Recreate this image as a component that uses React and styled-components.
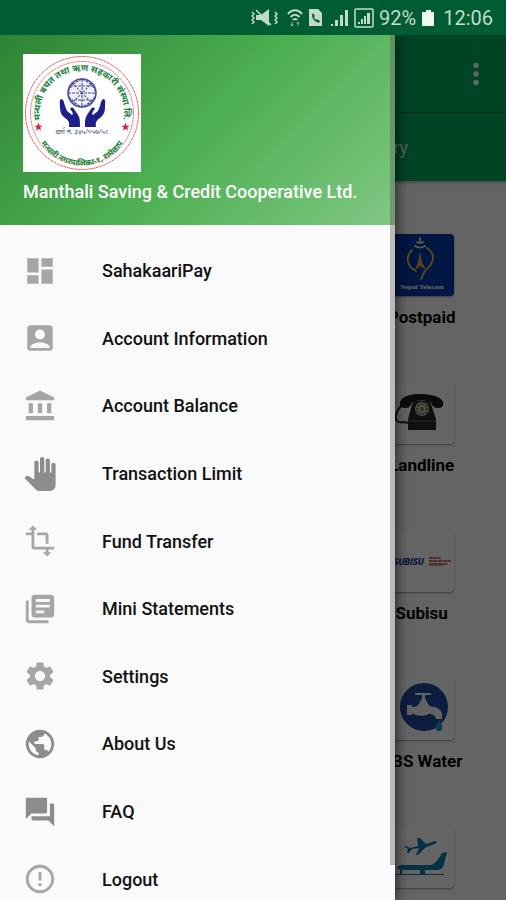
import React from "react";
import styled, { createGlobalStyle } from "styled-components";
import {
  MdDashboard,
  MdAccountBox,
  MdAccountBalance,
  MdPanTool,
  MdTransform,
  MdLibraryBooks,
  MdSettings,
  MdPublic,
  MdForum,
  MdErrorOutline,
  MdMoreVert,
} from "react-icons/md";

const GlobalStyle = createGlobalStyle`
  * { box-sizing: border-box; }
  body {
    margin: 0;
    font-family: Roboto, "Noto Sans", sans-serif;
    background: #fafafa;
  }
`;

const Screen = styled.div`
  display: flex;
  flex-direction: column;
  height: 100vh;
  overflow: hidden;
`;

const StatusBar = styled.header`
  display: flex;
  align-items: center;
  justify-content: flex-end;
  flex: none;
  gap: 5px;
  height: 35px;
  padding-right: 13px;
  background: #005c33;
  color: #c3dacb;
  font-size: 20px;
  line-height: 24px;

  svg { display: block; flex: none; }
`;

const Stage = styled.div`
  position: relative;
  flex: 1;
  min-height: 0;
  overflow: hidden;
`;

const AppBar = styled.div`
  display: flex;
  align-items: center;
  justify-content: flex-end;
  height: 78px;
  padding-right: 13px;
  background: #00aa60;
  border-bottom: 1px solid #008c4e;
`;

const IconButton = styled.button`
  display: flex;
  padding: 0;
  border: 0;
  background: none;
  color: #fff;
  font-size: 34px;
`;

const TabBar = styled.nav`
  display: grid;
  grid-template-columns: repeat(2, 1fr);
  height: 68px;
  background: #00aa60;
  box-shadow: 0 1px 4px rgba(0, 0, 0, 0.4);
`;

const Tab = styled.a`
  grid-column: 2;
  display: flex;
  align-items: center;
  justify-content: center;
  color: #e4f2ea;
  font-size: 18px;
  text-decoration: none;
`;

const ServiceGrid = styled.main`
  display: grid;
  grid-template-columns: repeat(3, 1fr);
  grid-auto-rows: 95px;
  row-gap: 53px;
  padding-top: 53px;
`;

const Service = styled.a`
  grid-column: 3;
  display: flex;
  flex-direction: column;
  align-items: center;
  gap: 9px;
  color: #000;
  text-decoration: none;
  font-weight: 700;
  font-size: 17px;
  line-height: 24px;
  white-space: nowrap;
`;

const Tile = styled.span`
  display: block;
  width: 62px;
  height: 62px;
  margin-left: 2px;
  overflow: hidden;
  flex: none;
  border-radius: 4px;
  background: ${(p) => p.$color || "#fdfdfd"};
  box-shadow: 0 1px 2px rgba(0, 0, 0, 0.4);

  svg { display: block; }
`;

const Scrim = styled.div`
  position: absolute;
  inset: 0;
  background: rgba(0, 0, 0, 0.6);
`;

const Drawer = styled.aside`
  position: absolute;
  inset: 0 auto 0 0;
  width: 78%;
  overflow: hidden;
  background: #fafafa;
  box-shadow: 2px 0 12px rgba(0, 0, 0, 0.6);
`;

const DrawerHeader = styled.div`
  display: flex;
  flex-direction: column;
  gap: 8px;
  height: 190px;
  padding: 19px 23px 0;
  background: linear-gradient(135deg, #2e8335, #4caf50 50%, #81c784);
`;

const Title = styled.h1`
  margin: 0;
  color: #fff;
  font-size: 18px;
  line-height: 24px;
  font-weight: 500;
  white-space: nowrap;
`;

const Menu = styled.nav`
  display: grid;
  grid-template-rows: repeat(10, 1fr);
  height: 676px;
  margin-top: 12px;
`;

const MenuLink = styled.a`
  display: flex;
  align-items: center;
  gap: 45px;
  padding: 0 23px;
  color: #111;
  font-size: 18px;
  font-weight: 500;
  text-decoration: none;

  svg {
    flex: none;
    font-size: 34px;
    color: ${(p) => p.$tone};
  }
`;

const ScrollThumb = styled.div`
  position: absolute;
  top: 0;
  right: 0;
  width: 5px;
  height: 96%;
  background: rgba(90, 90, 90, 0.4);
`;

const LIGHT = "#a6a6a6";
const DARK = "#8c8c8c";

const menu = [
  ["SahakaariPay", MdDashboard, LIGHT],
  ["Account Information", MdAccountBox, LIGHT],
  ["Account Balance", MdAccountBalance, LIGHT],
  ["Transaction Limit", MdPanTool, DARK],
  ["Fund Transfer", MdTransform, LIGHT],
  ["Mini Statements", MdLibraryBooks, LIGHT],
  ["Settings", MdSettings, LIGHT],
  ["About Us", MdPublic, DARK],
  ["FAQ", MdForum, DARK],
  ["Logout", MdErrorOutline, LIGHT],
];

function CoopLogo() {
  const star = "M0-4.4 1.1-1.3 4.2-1.3 1.7.6 2.6 3.7 0 1.8-2.6 3.7-1.7.6-4.2-1.3-1.1-1.3Z";
  return (
    <svg width="118" height="118" viewBox="0 0 118 118" role="img" aria-label="Cooperative emblem">
      <defs>
        <path id="arcTop" d="M18 68A42 42 0 1 1 100 68" />
        <path id="arcBottom" d="M14 82A49 49 0 0 0 104 82" />
      </defs>
      <rect width="118" height="118" fill="#fff" />
      <g fill="none" stroke="#e4575a">
        <circle cx="59" cy="59" r="56.500" strokeWidth="1" strokeDasharray="3 .6" />
        <circle cx="59" cy="59" r="51.500" strokeWidth=".8" strokeDasharray="3 .6" />
      </g>
      <g fill="#18803a" fontWeight="700" fontSize="9" fontFamily='"Noto Sans", sans-serif'>
        <text textAnchor="middle">
          <textPath href="#arcTop" startOffset="50%">मन्थली बचत तथा ऋण सहकारी संस्था लि.</textPath>
        </text>
        <text fontSize="8" textAnchor="middle">
          <textPath href="#arcBottom" startOffset="50%">मन्थली नगरपालिका-१, रामेछाप</textPath>
        </text>
      </g>
      <path d={star} fill="#d5203a" transform="translate(15.500 73)" />
      <path d={star} fill="#d5203a" transform="translate(102.500 73)" />
      <g stroke="#4a4a9c" fill="none" strokeWidth="1.100">
        <circle cx="59" cy="39" r="14" fill="#f0f0f8" strokeWidth="1.500" />
        <path d="M45 39h28M59 25v28M47 32h24M47 46h24M59 25c-18 8-18 20 0 28M59 25c18 8 18 20 0 28" strokeDasharray="3 1" />
        <path d="m49 29 20 20M69 29 49 49" strokeDasharray="2 1.500" />
      </g>
      <g fill="#1e1e8c">
        <path d="M57 73H46c1-5-1-7-4-9-4-3-5-7-5-11 0-3-1-6 1-8 3 0 3 4 4 7l2 5 5 4c2-1 0-4-2-6 1-2 3-2 4 0l4 6c2 3 2 6 2 12z" />
        <path d="M62 73h11c-1-5 1-7 4-9 4-3 5-7 5-11 0-3 1-6-1-8-3 0-3 4-4 7l-2 5-5 4c-2-1 0-4 2-6-1-2-3-2-4 0l-4 6c-2 3-2 6-2 12z" />
      </g>
      <text x="59" y="80" textAnchor="middle" fontSize="7" fill="#4a4a86" fontFamily='"Noto Sans", sans-serif'>
        दर्ता नं. ३४५/०५७/५८
      </text>
    </svg>
  );
}

function TelecomArt() {
  return (
    <svg width="62" height="62" viewBox="0 0 62 62" aria-hidden="true">
      <g fill="none" stroke="#e8b640" strokeWidth="1.800" strokeLinecap="round">
        <path d="M20 16c-7 7-5 17 4 21M35 14c9 6 7 15-1 22-3 3-4 6-5 9" />
        <path d="M23 12c3 2 7 2 10 0M25 8c2 1 5 1 6 0M28 4v3" stroke="#f4e6b0" />
      </g>
      <path d="m28 18 2 10 4 8-6-4-5 4 3-8z" fill="#e8a040" />
      <text x="30" y="55" textAnchor="middle" fill="#fff" fontSize="7" fontWeight="700" fontFamily='"Liberation Serif", serif'>
        Nepal Telecom
      </text>
    </svg>
  );
}

function PhoneArt() {
  return (
    <svg width="62" height="62" viewBox="0 0 62 62" aria-hidden="true">
      <path d="M13 22c-8 3-11 13-8 17 2 3 8 0 11 2" fill="none" stroke="#222" strokeWidth="2" />
      <path d="M8 20c2-7 13-8 21-8s20 2 22 8c1 4-1 6-5 6s-6-2-7-6c-7-2-13-2-19 0-1 4-3 6-6 6-4 0-7-2-6-6z" fill="#1d1d1d" />
      <path d="M21 19h17l6 18v11H16V37z" fill="#292929" />
      <path d="M16 39h28" stroke="#666" />
      <circle cx="30" cy="27" r="7" fill="#c6c6a8" />
      <circle cx="30" cy="27" r="5" fill="none" stroke="#555" strokeWidth="2" strokeDasharray="1.500 1.500" />
      <circle cx="30" cy="27" r="2" fill="#777" />
    </svg>
  );
}

function SubisuArt() {
  return (
    <svg width="62" height="62" viewBox="0 0 62 62" aria-hidden="true">
      <text x="1" y="35" fill="#26388f" fontSize="9" fontWeight="900" fontStyle="italic">
        SUBISU
      </text>
      <path d="M37 28h12M37 31h22M37 34h19" stroke="#c83a3a" strokeWidth="1.600" strokeDasharray="4 .6" />
      <path d="M37 35h14" stroke="#777" />
    </svg>
  );
}

function WaterArt() {
  return (
    <svg width="62" height="62" viewBox="0 0 62 62" aria-hidden="true">
      <circle cx="32" cy="29" r="24" fill="#224a9e" />
      <path
        fill="#f4f4f4"
        d="M23 15h16v2h-6v3l3 6c1 2 3 3 6 3 6 1 9 5 8 12h-6c0-3-3-5-7-5-6 3-13 2-17-1v2h-5V27h5v2c4 0 6-1 7-3l3-6v-3h-7z"
      />
      <path d="M47 42c5 7 4 11 0 11s-5-4 0-11z" fill="#1e8fc8" />
    </svg>
  );
}

function FlightArt() {
  return (
    <svg width="62" height="62" viewBox="0 0 62 62" aria-hidden="true" fill="#0e7aac">
      <path d="M9 44c-5-1-5-4 0-5h30c4-1 7-5 11-12l5-1-3 12c-1 4-3 6-8 6z" />
      <path d="M4 48h48v1H4zM8 44h2v4H8zM28 44h5v4h-5z" />
      <path d="m12 20 2 0 4 2 8-2-1-8 3 0 6 6 9-3c2 0 2 2 0 3l-9 3-8 8h-2l3-7-7 1-3 4-2 0 1-4z" />
    </svg>
  );
}

const services = [
  ["Postpaid", TelecomArt, "#0038a8"],
  ["Landline", PhoneArt],
  ["Subisu", SubisuArt],
  ["UBS Water", WaterArt],
  ["", FlightArt],
];

function StatusIcons() {
  return (
    <>
      <svg width="31" height="20" viewBox="0 0 31 20" fill="currentColor">
        <path d="M5 7h5l8-6v17l-8-6H5z" />
        <path d="m5 2 15 15M1 4l2 2-2 2 2 2-2 2 2 2-2 2M24 4l2 2-2 2 2 2-2 2 2 2-2 2" fill="none" stroke="currentColor" strokeWidth="1.500" />
      </svg>
      <svg width="16" height="20" viewBox="0 0 16 20" fill="none" stroke="currentColor" strokeWidth="2">
        <path d="M1 6c4-5 10-5 14 0M3.500 9c3-3 6-3 9 0M6 12c1-1.500 3-1.500 4 0" />
        <path d="M5 14v4m-1.500-1.500L5 18l1.500-1.500M11 18v-4m-1.500 1.500L11 14l1.500 1.500" strokeWidth="1" opacity=".7" />
      </svg>
      <svg width="18" height="20" viewBox="0 0 18 20">
        <path d="M1 1h9l4 4v13H1z" fill="currentColor" />
        <path d="M5 5c-2 2-1 8 6 10l1-2-3-2-1 1c-1-1-2-2-2-3l1-1z" fill="#005c33" />
      </svg>
      <svg width="18" height="20" viewBox="0 0 18 20" fill="currentColor">
        <path d="M0 16h2v2H0zM4 12h3v6H4zM9 7h3v11H9zM14 2h3v16h-3z" />
      </svg>
      <svg width="20" height="20" viewBox="0 0 20 20">
        <rect x="1" y="1" width="18" height="18" rx="1" fill="none" stroke="currentColor" strokeWidth="1.500" />
        <path d="M4 14h2v2H4zM7 11h2v5H7zM10 8h2v8h-2zM13 5h3v11h-3z" fill="currentColor" />
      </svg>
      <span>92%</span>
      <svg width="17" height="18" viewBox="0 0 17 18" fill="#f0f8f2">
        <path d="M5 1h5v2h3v14H1V3h4z" />
      </svg>
      <time>12:06</time>
    </>
  );
}

export default function App() {
  return (
    <Screen>
      <GlobalStyle />
      <StatusBar>
        <StatusIcons />
      </StatusBar>
      <Stage>
        <AppBar>
          <IconButton aria-label="More options">
            <MdMoreVert />
          </IconButton>
        </AppBar>
        <TabBar>
          <Tab href="#history">History</Tab>
        </TabBar>
        <ServiceGrid>
          {services.map(([name, Art, color], i) => (
            <Service href="#service" key={i} aria-label={name || "Flights"}>
              <Tile $color={color}>
                <Art />
              </Tile>
              {name}
            </Service>
          ))}
        </ServiceGrid>
        <Scrim />
        <Drawer>
          <DrawerHeader>
            <CoopLogo />
            <Title>Manthali Saving &amp; Credit Cooperative Ltd.</Title>
          </DrawerHeader>
          <Menu>
            {menu.map(([label, Icon, tone]) => (
              <MenuLink href="#menu" key={label} $tone={tone}>
                <Icon />
                {label}
              </MenuLink>
            ))}
          </Menu>
          <ScrollThumb />
        </Drawer>
      </Stage>
    </Screen>
  );
}
